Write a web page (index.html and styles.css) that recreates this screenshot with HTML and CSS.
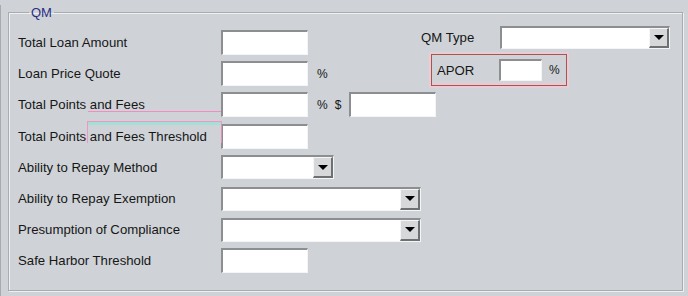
FILE: index.html
```html
<!DOCTYPE html>
<html lang="en">
  <head>
    <meta charset="UTF-8" />
    <title>QM</title>
    <link rel="stylesheet" href="styles.css">
  </head>
  <body>
    <div class="frame">
      <fieldset class="group">
        <legend>QM</legend>
        <div class="form">
          <div class="col-left">
            <div class="row">
              <span class="label">Total Loan Amount</span>
              <span class="field"></span>
            </div>
            <div class="row">
              <span class="label">Loan Price Quote</span>
              <span class="field"></span>
              <span class="unit">%</span>
            </div>
            <div class="row">
              <span class="label">Total Points and Fees</span>
              <span class="field"></span>
              <span class="unit">%</span>
              <span class="unit">$</span>
              <span class="field"></span>
            </div>
            <div class="row">
              <span class="label">Total Points and Fees Threshold</span>
              <span class="field"></span>
            </div>
            <div class="row">
              <span class="label">Ability to Repay Method</span>
              <span class="select select-sm"><span class="arrow"></span></span>
            </div>
            <div class="row">
              <span class="label">Ability to Repay Exemption</span>
              <span class="select select-lg"><span class="arrow"></span></span>
            </div>
            <div class="row">
              <span class="label">Presumption of Compliance</span>
              <span class="select select-lg"><span class="arrow"></span></span>
            </div>
            <div class="row">
              <span class="label">Safe Harbor Threshold</span>
              <span class="field"></span>
            </div>
          </div>
          <div class="col-right">
            <div class="row-type">
              <span class="label-type">QM Type</span>
              <span class="select select-type"><span class="arrow"></span></span>
            </div>
            <div class="apor">
              <span class="label-apor">APOR</span>
              <span class="field field-apor"></span>
              <span class="unit">%</span>
            </div>
          </div>
        </div>
      </fieldset>
    </div>
    <div class="guide guide-line"></div>
    <div class="guide guide-box"></div>
  </body>
</html>
```

FILE: styles.css
```css
:root {
  --bg: #cfd3d7;
  --text: #161616;
  --legend: #2c2c86;
  --edge-dark: #8c8e90;
  --edge-light: #f4f5f6;
  --guide-pink: #f58cc0;
  --guide-cyan: #9fe2d6;
}

* {
  box-sizing: border-box;
}

html,
body {
  margin: 0;
  height: 100%;
}

body {
  position: relative;
  background: var(--bg);
  font-family: "Liberation Sans", Arial, sans-serif;
  font-size: 13.2px;
  color: var(--text);
}

.frame {
  height: 296px;
  padding: 0 5px 3px 3px;
  border-left: 1px solid #a8abae;
}

.group {
  margin: 5px 0 0 4px;
  padding: 0 0 0 9px;
  height: 286px;
  border: 1px solid #a9acaf;
  box-shadow: inset 1px 1px 0 #eef0f1, 1px 1px 0 #eef0f1;
}

.group legend {
  padding: 0 2px;
  margin-left: 11px;
  color: var(--legend);
  font-size: 13px;
}

.form {
  display: flex;
  padding-top: 3px;
}

.col-left {
  width: 403px;
  display: flex;
  flex-direction: column;
  padding-top: 4px;
}

.row {
  display: flex;
  align-items: center;
  height: 31.2px;
}

.label {
  width: 203px;
  flex: none;
}

.field {
  display: block;
  flex: none;
  width: 87px;
  height: 25px;
  background: #fff;
  border-style: solid;
  border-width: 2px 1px 1px 2px;
  border-color: var(--edge-dark) var(--edge-light) var(--edge-light) var(--edge-dark);
}

.unit {
  margin-left: 9px;
  font-size: 12px;
}

.unit + .unit {
  margin-left: 7px;
}

.unit + .field {
  margin-left: 8px;
}

.select {
  display: flex;
  flex: none;
  justify-content: flex-end;
  height: 24px;
  background: #fff;
  border-style: solid;
  border-width: 2px 1px 1px 2px;
  border-color: var(--edge-dark) var(--edge-light) var(--edge-light) var(--edge-dark);
}

.select-sm {
  width: 113px;
}

.select-lg {
  width: 200px;
}

.arrow {
  width: 20px;
  height: 100%;
  background: #d6d8da;
  border-style: solid;
  border-width: 1px 2px 2px 1px;
  border-color: #f6f6f6 #6e7072 #6e7072 #f6f6f6;
  display: flex;
  align-items: center;
  justify-content: center;
}

.arrow::before {
  content: '';
  border-style: solid;
  border-width: 5px 5px 0 5px;
  border-color: #000 transparent transparent transparent;
}

.col-right {
  display: flex;
  flex-direction: column;
}

.row-type {
  display: flex;
  align-items: center;
  height: 23px;
  margin-top: 3px;
}

.label-type {
  width: 79px;
  flex: none;
}

.select-type {
  width: 170px;
  height: 23px;
}

.apor {
  display: flex;
  align-items: center;
  width: 136px;
  height: 32px;
  margin: 5px 0 0 10px;
  padding-left: 5px;
  border: 1px solid #a5574f;
  box-shadow: 0 0 0 2px #ebcbd6, inset 0 -4px 3px -2px #ecc8d6;
}

.label-apor {
  width: 62px;
  flex: none;
}

.field-apor {
  width: 43px;
  height: 22px;
}

.apor .unit {
  margin-left: 7px;
}

.guide {
  position: absolute;
  pointer-events: none;
}

.guide-line {
  left: 88px;
  top: 111px;
  width: 133px;
  height: 1px;
  background: var(--guide-pink);
}

.guide-box {
  left: 87px;
  top: 121px;
  width: 135px;
  height: 22px;
  border: 1px solid var(--guide-pink);
  border-bottom: 0;
  background: linear-gradient(var(--guide-cyan), var(--guide-cyan)) no-repeat 0 0 / 100% 3px;
  opacity: 0.85;
}
```
